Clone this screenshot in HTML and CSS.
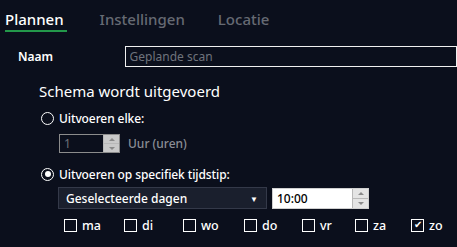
FILE: index.html
```html
<!DOCTYPE html>
<html lang="nl">
<head>
    <meta charset="UTF-8">
    <title>Geplande scan</title>
    <link rel="stylesheet" href="styles.css">
</head>
<body>
    <div class="tabs">
        <span class="tab active">Plannen</span>
        <span class="tab">Instellingen</span>
        <span class="tab">Locatie</span>
    </div>

    <div class="name-row">
        <label for="naam">Naam</label>
        <input type="text" id="naam" class="name-input" placeholder="Geplande scan">
    </div>

    <div class="schema">
        <h2>Schema wordt uitgevoerd</h2>

        <label class="radio-row">
            <input type="radio" name="mode">
            <span>Uitvoeren elke:</span>
        </label>
        <div class="interval-row">
            <div class="spinbox disabled">
                <input type="text" value="1" disabled>
                <span class="spin"><span class="up"></span><span class="down"></span></span>
            </div>
            <span class="unit">Uur (uren)</span>
        </div>

        <label class="radio-row">
            <input type="radio" name="mode" checked>
            <span>Uitvoeren op specifiek tijdstip:</span>
        </label>
        <div class="time-row">
            <div class="select">
                <span>Geselecteerde dagen</span>
                <span class="arrow">&#9660;</span>
            </div>
            <div class="spinbox time">
                <input type="text" value="10:00">
                <span class="spin"><span class="up"></span><span class="down"></span></span>
            </div>
        </div>

        <div class="days">
            <label class="day"><input type="checkbox"><span>ma</span></label>
            <label class="day"><input type="checkbox"><span>di</span></label>
            <label class="day"><input type="checkbox"><span>wo</span></label>
            <label class="day"><input type="checkbox"><span>do</span></label>
            <label class="day"><input type="checkbox"><span>vr</span></label>
            <label class="day"><input type="checkbox"><span>za</span></label>
            <label class="day"><input type="checkbox" checked><span>zo</span></label>
        </div>
    </div>
</body>
</html>
```

FILE: styles.css
```css
body { margin: 0; background: #0b0f1c; color: #fff; font-family: "Noto Sans", sans-serif; font-size: 12px; overflow: hidden; }

.tabs { display: flex; gap: 33px; padding: 8px 0 0 5px; height: 24px; }
.tab { font-size: 15px; font-weight: 500; color: #666a73; line-height: 22px; height: 24px; box-sizing: border-box; }
.tab.active { color: #fff; border-bottom: 2px solid #23984a; padding-right: 3px; }

.name-row { display: flex; align-items: center; margin-top: 14px; height: 21px; }
.name-row label { width: 109px; padding-left: 18px; font-weight: 600; }
.name-input { width: 340px; height: 21px; box-sizing: border-box; background: #0b0f1c; border: 1px solid #f0f0f0; color: #fff; font: inherit; padding: 0 4px; outline: none; }
.name-input::placeholder { color: #6f737c; }

.schema { padding-left: 41px; }
.schema h2 { margin: 14px 0 0 -2px; font-size: 15px; font-weight: 400; line-height: 20px; }

.radio-row { display: flex; align-items: center; gap: 5px; height: 16px; font-weight: 500; letter-spacing: -0.1px; }
.radio-row:first-of-type { margin-top: 9px; }
.radio-row input { appearance: none; margin: 0; width: 13px; height: 13px; border: 1.5px solid #fff; border-radius: 50%; box-sizing: border-box; display: grid; place-content: center; }
.radio-row input:checked::before { content: ""; width: 6px; height: 6px; border-radius: 50%; background: #fff; }

.interval-row { display: flex; align-items: center; gap: 8px; margin: 8px 0 0 18px; height: 19px; }
.unit { color: #8a8d95; font-weight: 500; }
.interval-row + .radio-row { margin-top: 13px; }

.spinbox { display: flex; height: 19px; box-sizing: border-box; border: 1px solid #8c8c8c; }
.spinbox input { border: 0; outline: none; font: inherit; padding: 0 4px; box-sizing: border-box; height: 100%; }
.spinbox.disabled input { width: 43px; background: #0b0f1c; color: #6d717a; }
.spin { display: flex; flex-direction: column; width: 15px; background: #e4e4e4; border-left: 1px solid #b8b8b8; }
.spin span { flex: 1; display: grid; place-content: center; }
.spin .up::before { content: ""; border: 3px solid transparent; border-bottom: 3px solid #8a8a8a; border-top: 0; }
.spin .down { border-top: 1px solid #b8b8b8; }
.spin .down::before { content: ""; border: 3px solid transparent; border-top: 3px solid #8a8a8a; border-bottom: 0; }
.spinbox.disabled .spin { background: #c9c9c9; }

.time-row { display: flex; align-items: center; gap: 5px; margin: 5px 0 0 17px; }
.select { display: flex; justify-content: space-between; align-items: center; width: 209px; height: 22px; box-sizing: border-box; background: #1a1f2d; border: 1px solid #343949; padding: 0 8px 0 7px; font-weight: 500; }
.arrow { font-size: 8px; }
.spinbox.time { height: 21px; border-color: #d0d0d0; background: #fff; }
.spinbox.time input { width: 79px; background: #fff; color: #000; font-weight: 500; }

.days { display: grid; grid-template-columns: 60px 59px 61px 58px 53px 56px auto; margin: 9px 0 0 23px; }
.day { display: flex; align-items: center; gap: 5px; font-weight: 500; font-size: 12.5px; height: 14px; }
.day input { appearance: none; margin: 0; width: 13px; height: 13px; border: 1px solid #fff; box-sizing: border-box; display: grid; place-content: center; }
.day input:checked::before { content: "\2714"; font-size: 10px; line-height: 1; color: #fff; }
```
